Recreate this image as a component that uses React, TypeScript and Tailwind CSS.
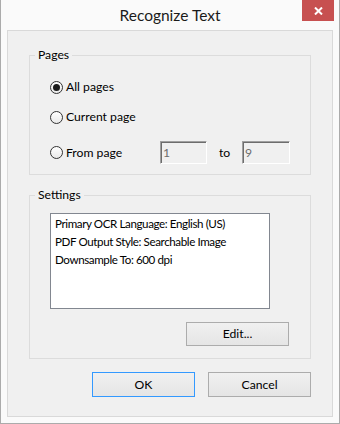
import React from "react";

type RadioProps = {
  checked?: boolean;
  label: string;
  labelClassName?: string;
};

function Radio({ checked, label, labelClassName }: RadioProps) {
  return (
    <label className="flex items-center gap-[3px]">
      <span className="flex h-[13px] w-[13px] items-center justify-center rounded-full border border-[#333333] bg-linear-to-b from-white to-[#e9e9e9]">
        {checked ? <span className="h-[7px] w-[7px] rounded-full bg-[#1b1b1b]" /> : null}
      </span>
      <span className={labelClassName}>{label}</span>
    </label>
  );
}

function PageInput({ value, width }: { value: string; width: string }) {
  return (
    <div
      className={`flex h-[23px] ${width} items-center border border-t-[#a0a0a0] border-l-[#a0a0a0] border-r-white border-b-white bg-[#f0f0f0] pl-[2px] text-[#6d6d6d] shadow-[inset_1px_1px_0_#6d6d6d]`}
    >
      {value}
    </div>
  );
}

const buttonBase =
  "flex items-center justify-center border bg-linear-to-b from-[#f0f0f0] to-[#e5e5e5] text-black";

export default function App() {
  return (
    <div className="flex h-[424px] w-[340px] flex-col border-x border-b border-[#ababab] bg-[#fafafa] px-[6px] pb-[6px] font-['Lato',sans-serif] text-[12.2px] leading-[16px] text-black">
      <div className="relative flex h-[30px] shrink-0 items-center justify-center">
        <span className="text-[15.5px] leading-[20px] text-[#1a1a1a]">Recognize Text</span>
        <div className="absolute right-[-1px] top-0 flex h-[21px] w-[32px] items-center justify-center bg-[#c75050]">
          <svg width="9" height="8" viewBox="0 0 9 8" fill="none">
            <path d="M1 0.5 L8 7.5 M8 0.5 L1 7.5" stroke="white" strokeWidth="2" />
          </svg>
        </div>
      </div>

      <div className="flex flex-1 flex-col border border-[#d9d9d9] bg-[#f0f0f0] pt-[16px]">
        <fieldset className="mx-[21px] border border-[#dcdcdc]">
          <legend className="ml-[5px] px-[3px] leading-[16px]">Pages</legend>
          <div className="flex flex-col pb-[10px] pl-[20px] pt-[16px]">
            <Radio checked label="All pages" />
            <div className="mt-[14px]">
              <Radio label="Current page" />
            </div>
            <div className="mt-[16px] flex h-[23px] items-center">
              <div className="w-[110px]">
                <Radio label="From page" />
              </div>
              <PageInput value="1" width="w-[47px]" />
              <span className="ml-[12px] w-[11px]">to</span>
              <div className="ml-[12px]">
                <PageInput value="9" width="w-[48px]" />
              </div>
            </div>
          </div>
        </fieldset>

        <fieldset className="mx-[21px] mt-[12px] border border-[#dcdcdc]">
          <legend className="ml-[5px] px-[3px] leading-[16px]">Settings</legend>
          <div className="flex flex-col pb-[12px] pl-[20px] pt-[10px]">
            <div className="h-[96px] w-[220px] border border-[#828790] bg-white pl-[4px] pt-[1px] text-[11.6px] leading-[18px] tracking-[-0.4px]">
              <div>Primary OCR Language: English (US)</div>
              <div>PDF Output Style: Searchable Image</div>
              <div>Downsample To: 600 dpi</div>
            </div>
            <button className={`${buttonBase} mr-[21px] mt-[13px] h-[24px] w-[103px] self-end border-[#acacac]`}>
              Edit...
            </button>
          </div>
        </fieldset>

        <div className="mt-[13px] flex justify-end gap-[13px] pr-[21px]">
          <button className={`${buttonBase} h-[25px] w-[103px] border-[#3399ff]`}>OK</button>
          <button className={`${buttonBase} h-[25px] w-[103px] border-[#acacac]`}>Cancel</button>
        </div>
      </div>
    </div>
  );
}
